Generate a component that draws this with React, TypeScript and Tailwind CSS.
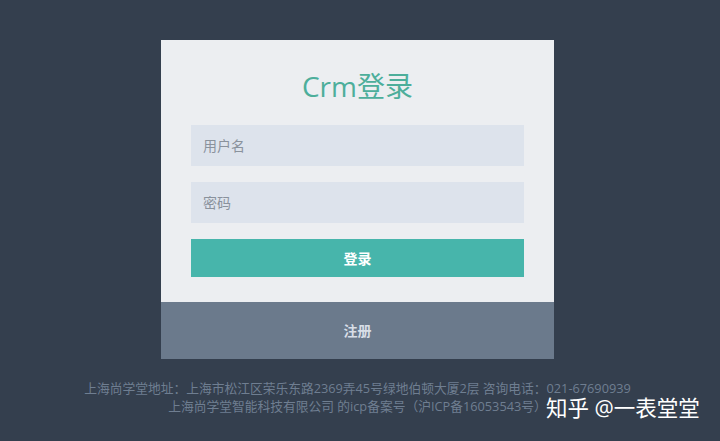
import React from "react";

export default function App() {
  return (
    <div
      className="relative w-[720px] h-[441px] bg-[#343f4e] overflow-hidden"
      style={{ fontFamily: '"Open Sans", "Noto Sans CJK SC", sans-serif' }}
    >
      {/* Login card */}
      <div className="ml-[161px] pt-[40px] w-[393px]">
        <div className="bg-[#eceef1] px-[30px] pt-[28px] pb-[25px]">
          <h1 className="text-center text-[28px] leading-[36px] text-[#4dae9b] mb-[21px]">Crm登录</h1>
          <div className="flex flex-col gap-[16px]">
            <input
              placeholder="用户名"
              className="h-[41px] w-full bg-[#dde3ec] px-[12px] text-[14px] text-[#555] placeholder-[#8a929c] outline-none"
            />
            <input
              type="password"
              placeholder="密码"
              className="h-[41px] w-full bg-[#dde3ec] px-[12px] text-[14px] text-[#555] placeholder-[#8a929c] outline-none"
            />
            <button className="h-[38px] w-full bg-[#47b5ab] text-[14px] font-bold text-white">登录</button>
          </div>
        </div>
        <div className="h-[57px] bg-[#6b7a8c] flex items-center justify-center text-[14px] font-bold text-[#d8dee7]">
          注册
        </div>
      </div>

      {/* Footer */}
      <div className="mt-[20px] text-center text-[12.75px] leading-[18px] text-[#6f7e91] pr-[5px]">
        <p>上海尚学堂地址：上海市松江区荣乐东路2369弄45号绿地伯顿大厦2层 咨询电话：021-67690939</p>
        <p>上海尚学堂智能科技有限公司 的icp备案号（沪ICP备16053543号）</p>
      </div>

      {/* Watermark */}
      <div className="absolute left-[546px] top-[394px] text-[21.5px] leading-[28px] text-white">知乎 @一表堂堂</div>
    </div>
  );
}
